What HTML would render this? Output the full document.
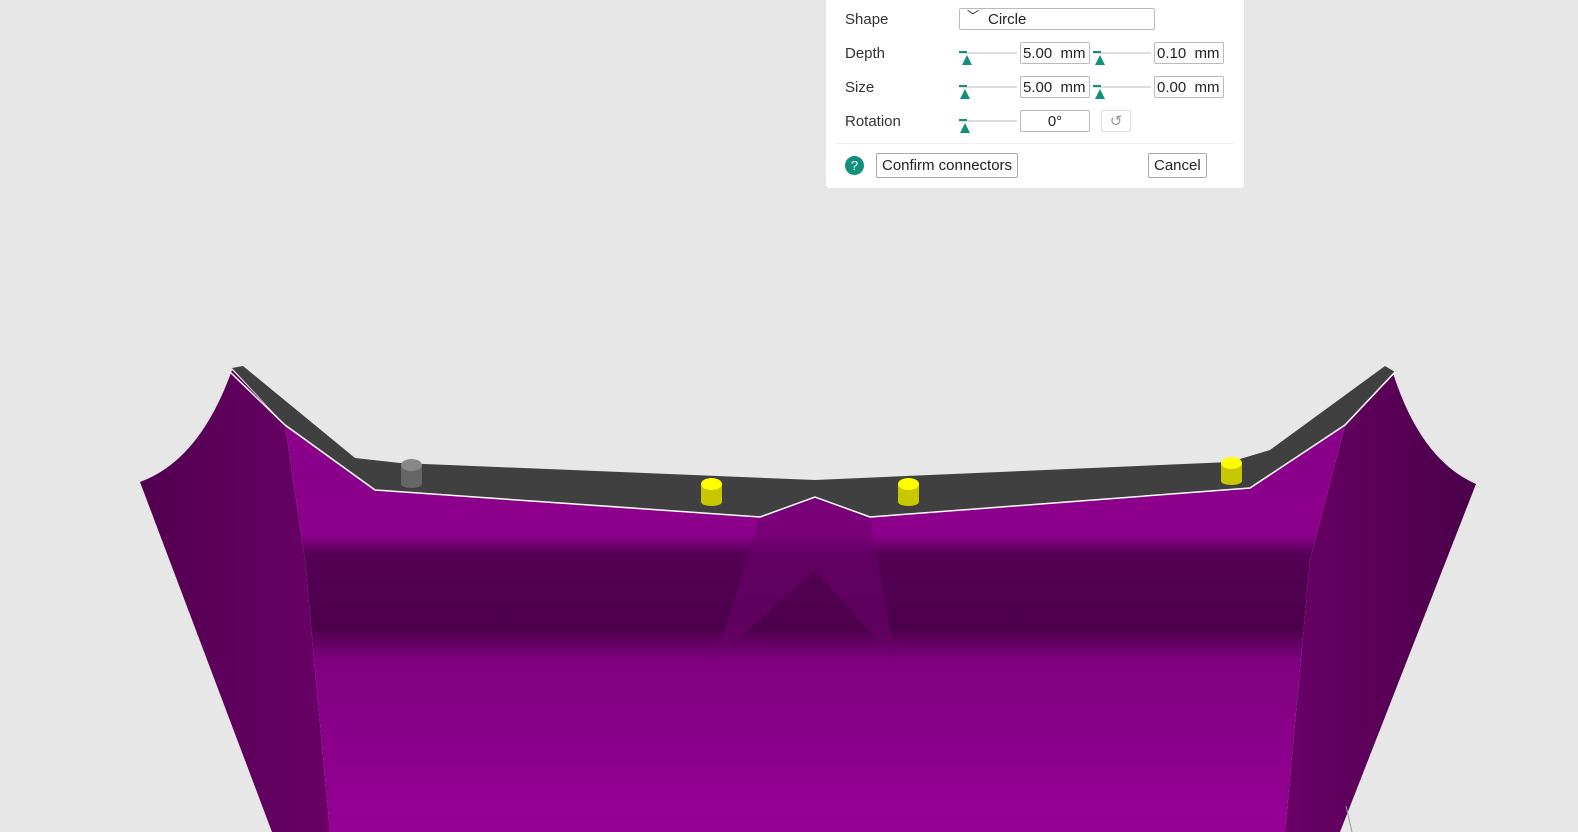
<!DOCTYPE html>
<html><head><style>
body{margin:0;width:1578px;height:832px;overflow:hidden;background:#e7e7e7;font-family:"Liberation Sans",sans-serif;position:relative}
.panel{position:absolute;left:826px;top:0;width:418px;height:188px;background:#fff;border-radius:0 0 4px 4px;font-size:15px;color:#333}
.lbl{position:absolute;left:19px}
.box{position:absolute;border:1px solid #bbb;border-radius:2px;height:22px;line-height:22px;font-size:15px;color:#222;box-sizing:border-box;background:#fff}
.sl{position:absolute;height:2px;background:#ddd}
.sl:before{content:"";position:absolute;left:0;top:-1px;width:8px;height:2px;background:#11917d}
.tri{position:absolute;width:0;height:0;border-left:5px solid transparent;border-right:5px solid transparent;border-bottom:10px solid #11917d}
.btn{position:absolute;border:1px solid #aaa;border-radius:2px;height:25px;line-height:24px;padding:0 5px;box-sizing:border-box;font-size:15px;color:#222}
</style></head><body>
<svg width="1578" height="832" style="position:absolute;left:0;top:0">
<defs>
<linearGradient id="fr" gradientUnits="userSpaceOnUse" x1="0" y1="425" x2="0" y2="832">
<stop offset="0" stop-color="#8a008a"/><stop offset="0.27" stop-color="#8c008c"/><stop offset="0.32" stop-color="#540054"/><stop offset="0.5" stop-color="#4c004c"/><stop offset="0.58" stop-color="#800080"/><stop offset="1" stop-color="#960096"/>
</linearGradient>
<linearGradient id="sdl" x1="0" y1="0" x2="1" y2="0"><stop offset="0" stop-color="#52004f"/><stop offset="1" stop-color="#6a0068"/></linearGradient>
<linearGradient id="sdr" x1="0" y1="0" x2="1" y2="0"><stop offset="0" stop-color="#6a0068"/><stop offset="1" stop-color="#4a0048"/></linearGradient>
</defs>
<path d="M232,370 Q200,460 140,482 L272,832 L330,832 L305,560 L285,425 Z" fill="url(#sdl)"/>
<path d="M1392,370 Q1420,460 1476,484 L1340,832 L1285,832 L1310,560 L1345,425 Z" fill="url(#sdr)"/>
<path d="M285,425 L375,490 L760,517 L815,497 L870,517 L1250,488 L1345,425 L1310,560 L1285,832 L330,832 L305,560 Z" fill="url(#fr)"/>
<path d="M760,517 L815,497 L870,517 L895,660 L815,570 L715,660 Z" fill="#6a006a" opacity="0.6"/>
<path d="M232,368 L243,366 L355,458 L400,463 L815,480 L1230,462 L1270,450 L1385,366 L1395,372 L1345,425 L1250,488 L870,517 L815,497 L760,517 L375,490 L285,425 Z" fill="#404040"/>
<path d="M230,372 L285,425 L375,490 L760,517 L815,497 L870,517 L1250,488 L1345,425 L1395,372" fill="none" stroke="#fff" stroke-width="1.5"/>
<g>
<rect x="401" y="465" width="21" height="19" fill="#666"/><ellipse cx="411.5" cy="484" rx="10.5" ry="4" fill="#666"/><ellipse cx="411.5" cy="465" rx="10.5" ry="6" fill="#888"/>
<rect x="701" y="484" width="21" height="18" fill="#c8c800"/><ellipse cx="711.5" cy="502" rx="10.5" ry="4" fill="#c8c800"/><ellipse cx="711.5" cy="484" rx="10.5" ry="6" fill="#ff0"/>
<rect x="898" y="484" width="21" height="18" fill="#c8c800"/><ellipse cx="908.5" cy="502" rx="10.5" ry="4" fill="#c8c800"/><ellipse cx="908.5" cy="484" rx="10.5" ry="6" fill="#ff0"/>
<rect x="1221" y="463" width="21" height="18" fill="#c8c800"/><ellipse cx="1231.5" cy="481" rx="10.5" ry="4" fill="#c8c800"/><ellipse cx="1231.5" cy="463" rx="10.5" ry="6" fill="#ff0"/>
</g>
<line x1="1346" y1="806" x2="1352" y2="832" stroke="#999"/>
</svg>
<div class="panel">
<div class="lbl" style="top:11px">Shape</div>
<div class="box" style="left:133px;top:8px;width:196px;padding-left:28px">Circle<span style="position:absolute;left:7px;top:-4px;font-size:12px">﹀</span></div>
<div class="lbl" style="top:45px">Depth</div>
<div class="sl" style="left:133px;top:52px;width:58px"></div><div class="tri" style="left:136px;top:55px"></div>
<div class="box" style="left:194px;top:42px;width:70px;padding-left:2px">5.00&nbsp; mm</div>
<div class="sl" style="left:267px;top:52px;width:58px"></div><div class="tri" style="left:269px;top:55px"></div>
<div class="box" style="left:328px;top:42px;width:70px;padding-left:2px">0.10&nbsp; mm</div>
<div class="lbl" style="top:79px">Size</div>
<div class="sl" style="left:133px;top:86px;width:58px"></div><div class="tri" style="left:134px;top:89px"></div>
<div class="box" style="left:194px;top:76px;width:70px;padding-left:2px">5.00&nbsp; mm</div>
<div class="sl" style="left:267px;top:86px;width:58px"></div><div class="tri" style="left:269px;top:89px"></div>
<div class="box" style="left:328px;top:76px;width:70px;padding-left:2px">0.00&nbsp; mm</div>
<div class="lbl" style="top:113px">Rotation</div>
<div class="sl" style="left:133px;top:120px;width:58px"></div><div class="tri" style="left:134px;top:123px"></div>
<div class="box" style="left:194px;top:110px;width:70px;text-align:center">0°</div>
<div class="box" style="left:275px;top:110px;width:30px;border-color:#ddd;text-align:center;color:#999">↺</div>
<div style="position:absolute;left:10px;right:10px;top:143px;height:1px;background:#eee"></div>
<div style="position:absolute;left:19px;top:156px;width:19px;height:19px;border-radius:50%;background:#11917d;color:#fff;font-size:13px;text-align:center;line-height:19px">?</div>
<div class="btn" style="left:50px;top:153px">Confirm connectors</div>
<div class="btn" style="left:322px;top:153px">Cancel</div>
</div>
</body></html>
